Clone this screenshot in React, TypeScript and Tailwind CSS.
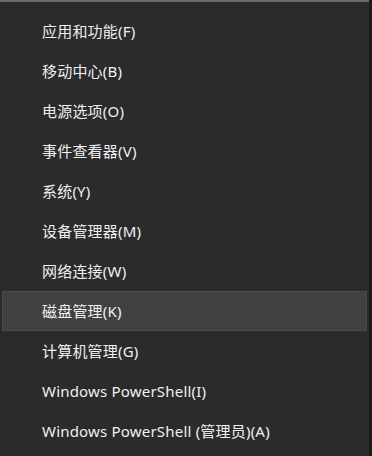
const items = [
  "应用和功能(F)",
  "移动中心(B)",
  "电源选项(O)",
  "事件查看器(V)",
  "系统(Y)",
  "设备管理器(M)",
  "网络连接(W)",
  "磁盘管理(K)",
  "计算机管理(G)",
  "Windows PowerShell(I)",
  "Windows PowerShell (管理员)(A)",
];

export default function App() {
  return (
    <div
      className="flex h-[456px] w-[372px] overflow-hidden bg-[#1c1c1c]"
      style={{ fontFamily: '"Noto Sans", "Noto Sans CJK SC", sans-serif' }}
    >
      <div className="flex h-full w-[369px] flex-col border-t-2 border-[#6a6a6a] bg-[#2b2b2b] pt-[9px]">
        {items.map((label) => {
          const active = label.startsWith("磁盘");
          return (
            <div
              key={label}
              className={
                active
                  ? "mx-[2px] flex h-[40px] items-center border border-[#4b4b4b] bg-[#414141] pl-[39px] text-[15px] tracking-[0.2px] text-[#f0f0f0]"
                  : "mx-[2px] flex h-[40px] items-center border border-transparent pl-[39px] text-[15px] tracking-[0.2px] text-[#f0f0f0]"
              }
            >
              {label}
            </div>
          );
        })}
      </div>
    </div>
  );
}
